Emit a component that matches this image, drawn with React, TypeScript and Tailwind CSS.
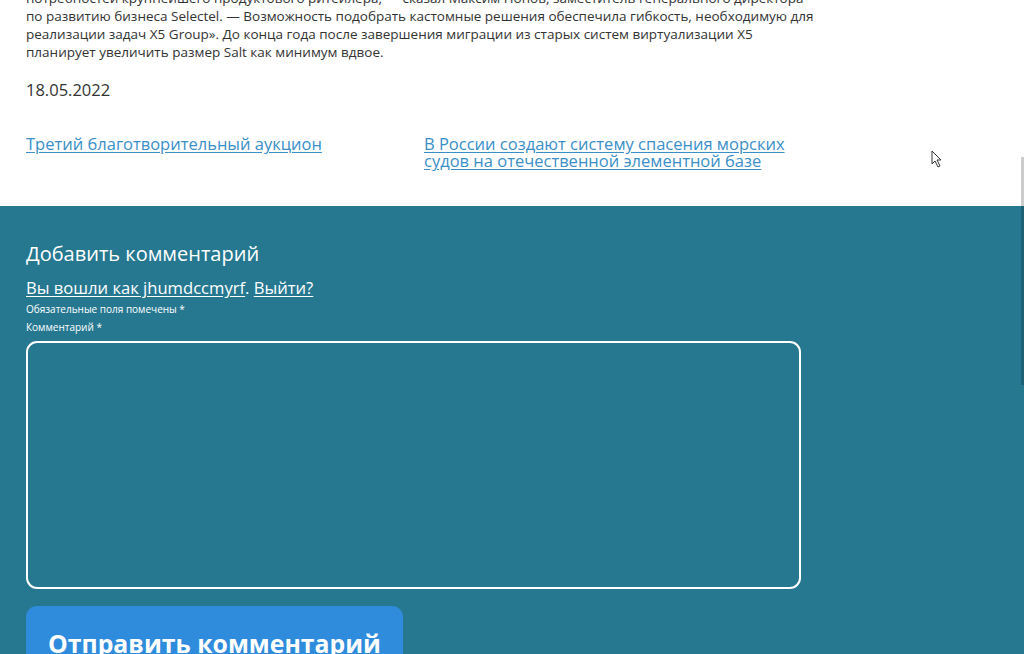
export default function App() {
  return (
    <div className="relative w-[1024px] h-[654px] overflow-hidden bg-white" style={{ fontFamily: '"Open Sans", "Noto Sans", sans-serif' }}>
      <div className="flex flex-col px-[26px] h-[206px] text-[#333]">
        <div className="w-[790px] text-[13.5px] leading-[18px] -mt-[11px]">
          <p>потребностей крупнейшего продуктового ритейлера, — сказал Максим Попов, заместитель генерального директора по развитию бизнеса Selectel. — Возможность подобрать кастомные решения обеспечила гибкость, необходимую для реализации задач X5 Group». До конца года после завершения миграции из старых систем виртуализации X5 планирует увеличить размер Salt как минимум вдвое.</p>
          <p className="mt-[18px] text-[16.5px] leading-[22px]">18.05.2022</p>
          <div className="mt-[34px] flex text-[16.5px] leading-[17px] text-[#3a8fc8]">
            <a href="#" className="w-[398px] underline underline-offset-2">Третий благотворительный аукцион</a>
            <a href="#" className="w-[370px] underline underline-offset-2">В России создают систему спасения морских судов на отечественной элементной базе</a>
          </div>
        </div>
      </div>
      <div className="bg-[#267891] h-[448px] px-[26px] pt-[34px] text-white">
        <h3 className="text-[20px] leading-[28px]">Добавить комментарий</h3>
        <p className="mt-[9px] text-[16.6px] leading-[22px]">
          <a href="#" className="underline underline-offset-2">Вы вошли как jhumdccmyrf</a>. <a href="#" className="underline underline-offset-2">Выйти?</a>
        </p>
        <p className="mt-[3px] text-[10px] leading-[14px]">Обязательные поля помечены *</p>
        <p className="mt-[4px] text-[10px] leading-[14px]">Комментарий *</p>
        <div className="mt-[7px] w-[775px] h-[248px] border-2 border-white rounded-[11px]" />
        <button className="mt-[17px] w-[377px] h-[80px] bg-[#2f8cdc] rounded-[11px] text-[24.8px] font-bold text-white flex justify-center pt-[19px]">Отправить комментарий</button>
      </div>
      <div className="absolute right-0 top-[157px] w-[3px] h-[228px] bg-black/20" />
      <svg className="absolute left-[931px] top-[150px]" width="12" height="18" viewBox="0 0 12 18">
        <path d="M1 1 L1 14 L4 11 L7 17 L9 16 L6 10 L10 10 Z" fill="white" stroke="#333" strokeWidth="1" />
      </svg>
    </div>
  );
}
